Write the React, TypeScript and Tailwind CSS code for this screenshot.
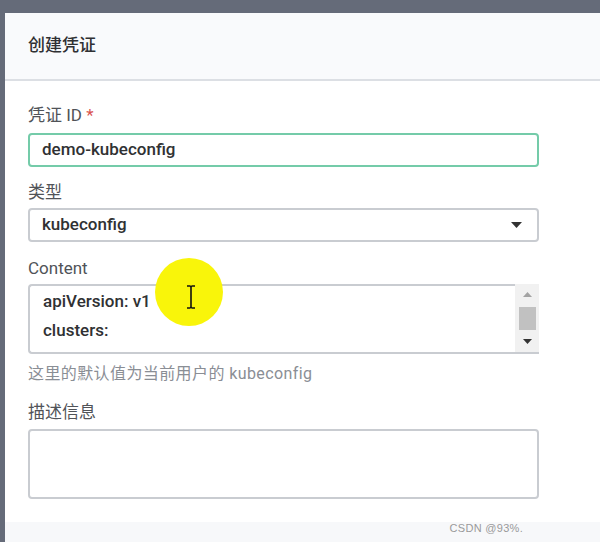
export default function App() {
  const font = { fontFamily: 'Roboto, "Noto Sans CJK SC", sans-serif' };
  return (
    <div
      className="relative h-[542px] w-[600px] overflow-hidden bg-[#656b79] pl-[5px] pt-[13px]"
      style={font}
    >
      <div className="flex h-full flex-col bg-white">
        <div className="flex h-[68px] shrink-0 items-center border-b-2 border-[#dcdfe4] bg-[#f9fafc] px-[23px]">
          <span className="text-[17px] font-medium text-[#2f3033]">创建凭证</span>
        </div>

        <div className="flex flex-col px-[23px] pt-[22px]">
          <label className="mb-[6px] h-[24px] text-[17px] leading-[24px] text-[#505358]">
            凭证 ID <span className="text-[#d9534f]">*</span>
          </label>
          <div className="flex h-[34px] w-[511px] items-center rounded-[4px] border-2 border-[#74cba9] px-[12px] text-[17px] font-medium text-[#303133]">
            demo-kubeconfig
          </div>

          <label className="mb-[4px] mt-[13px] h-[24px] text-[17px] leading-[24px] text-[#505358]">类型</label>
          <div className="flex h-[34px] w-[511px] items-center justify-between rounded-[4px] border-2 border-[#c9ccd1] pl-[12px] pr-[15px] text-[17px] font-medium text-[#303133]">
            <span>kubeconfig</span>
            <svg width="11" height="6" viewBox="0 0 11 6">
              <path d="M0 0 H11 L5.5 6 Z" fill="#333" />
            </svg>
          </div>

          <label className="mb-[4px] mt-[14px] h-[24px] text-[17px] leading-[24px] text-[#505358]">Content</label>
          <div className="flex h-[70px] w-[511px]">
            <div className="flex-1 overflow-hidden rounded-l-[4px] border-y-2 border-l-2 border-[#c9ccd1] px-[13px] pt-[1px] text-[17px] font-medium leading-[29px] text-[#303133]">
              <div>apiVersion: v1</div>
              <div>clusters:</div>
              <div>- cluster:</div>
            </div>
            <div className="flex w-[24px] flex-col items-center justify-between border-b-2 border-[#c9ccd1] bg-[#f1f1f1] py-[8px]">
              <svg width="9" height="5" viewBox="0 0 9 5">
                <path d="M0 5 H9 L4.5 0 Z" fill="#a3a3a3" />
              </svg>
              <div className="h-[23px] w-[17px] bg-[#c1c1c1]" />
              <svg width="9" height="5" viewBox="0 0 9 5">
                <path d="M0 0 H9 L4.5 5 Z" fill="#333" />
              </svg>
            </div>
          </div>

          <p className="mt-[8px] h-[24px] whitespace-nowrap text-[16px] leading-[24px] tracking-[0.4px] text-[#8a8e95]">
            这里的默认值为当前用户的 kubeconfig
          </p>

          <label className="mb-[5px] mt-[14px] h-[24px] text-[17px] leading-[24px] text-[#505358]">描述信息</label>
          <div className="h-[70px] w-[511px] rounded-[4px] border-2 border-[#c9ccd1]" />
        </div>

        <div className="mt-[23px] flex flex-1 justify-end bg-[#f7f8fa] pr-[77px] pt-[0px]">
          <span
            className="text-[11px] leading-[12px] tracking-[0.3px] text-[#9a9a9a]"
            style={{ fontFamily: '"Liberation Sans", sans-serif' }}
          >
            CSDN @93%.
          </span>
        </div>
      </div>

      <div className="absolute left-[155px] top-[258px] h-[68px] w-[68px] rounded-full bg-[#f9f50a]" />
      <svg className="absolute left-[185px] top-[284px]" width="12" height="26" viewBox="0 0 12 26">
        <path d="M2 2 H5 Q6 2 6 4 V22 Q6 24 5 24 H2 M10 2 H7 Q6 2 6 4 M10 24 H7 Q6 24 6 22" stroke="#111" strokeWidth="1.6" fill="none" />
      </svg>
    </div>
  );
}
